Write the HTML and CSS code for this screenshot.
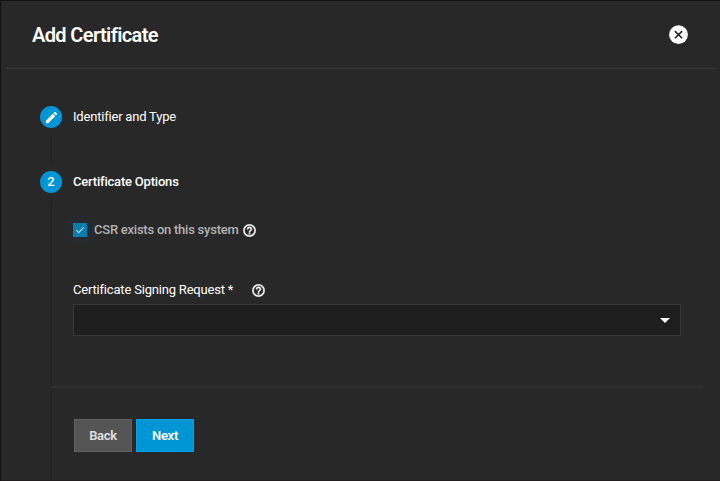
FILE: index.html
```html
<!DOCTYPE html>
<html lang="en">
<head>
<meta charset="utf-8">
<title>Add Certificate</title>
<link rel="stylesheet" href="styles.css">
</head>
<body>
<main class="panel">
  <header class="header">
    <h1 class="title">Add Certificate</h1>
    <button class="close" aria-label="Close"><svg width="20" height="20" viewBox="0 0 20 20"><circle cx="9.500" cy="9.700" r="9.400" fill="#fff"/><path d="M5.900 6.100l7.200 7.200M13.100 6.100l-7.200 7.200" stroke="#222" stroke-width="1.6"/></svg></button>
  </header>
  <section class="step">
    <div class="rail">
      <span class="badge"><svg width="15" height="15" viewBox="0 0 24 24" fill="#fff"><path d="M3 17.25V21h3.75L17.81 9.94l-3.75-3.75L3 17.25zM20.71 7.04a1 1 0 0 0 0-1.41l-2.34-2.34a1 1 0 0 0-1.41 0l-1.83 1.83 3.75 3.75 1.83-1.83z"/></svg></span>
      <span class="line"></span>
    </div>
    <div class="content"><h2 class="label first">Identifier and Type</h2></div>
  </section>
  <section class="step active">
    <div class="rail">
      <span class="badge">2</span>
      <span class="line"></span>
    </div>
    <div class="content">
      <h2 class="label second">Certificate Options</h2>
      <div class="check-row">
        <span class="checkbox"><svg width="14" height="14" viewBox="0 0 14 14"><path d="M3.3 7.2l2.4 2.5 5-5.3" fill="none" stroke="#bfcdd4" stroke-width="1.2"/></svg></span>
        <span class="check-text">CSR exists on this system</span>
        <svg class="help" width="13" height="13" viewBox="1.500 1.500 21 21" fill="#fff"><path d="M11 18h2v-2h-2v2zm1-16a10 10 0 1 0 0 20 10 10 0 0 0 0-20zm0 18a8 8 0 1 1 0-16 8 8 0 0 1 0 16zm0-14a4 4 0 0 0-4 4h2a2 2 0 1 1 4 0c0 2-3 1.750-3 5h2c0-2.250 3-2.500 3-5a4 4 0 0 0-4-4z" stroke="#fff" stroke-width=".7"/></svg>
      </div>
      <div class="field-head">
        <span class="field-label">Certificate Signing Request *</span>
        <svg class="help" width="13" height="13" viewBox="1.500 1.500 21 21" fill="#fff"><path d="M11 18h2v-2h-2v2zm1-16a10 10 0 1 0 0 20 10 10 0 0 0 0-20zm0 18a8 8 0 1 1 0-16 8 8 0 0 1 0 16zm0-14a4 4 0 0 0-4 4h2a2 2 0 1 1 4 0c0 2-3 1.750-3 5h2c0-2.250 3-2.500 3-5a4 4 0 0 0-4-4z" stroke="#fff" stroke-width=".7"/></svg>
      </div>
      <div class="select"><span class="arrow"></span></div>
      <div class="actions">
        <button class="btn back">Back</button>
        <button class="btn next">Next</button>
      </div>
    </div>
  </section>
</main>
</body>
</html>
```
FILE: styles.css
```css
* { box-sizing: border-box; }
body {
  margin: 0;
  height: 481px;
  overflow: hidden;
  background: #282828;
  color: #fff;
  font: 13px/16px Roboto, sans-serif;
}
.panel {
  display: flex;
  flex-direction: column;
  height: 481px;
  border-top: 1px solid #101010;
  border-left: 1px solid #101010;
  border-bottom: 1px solid #1f1d1e;
}
.header {
  display: flex;
  justify-content: space-between;
  align-items: center;
  height: 68px;
  margin: 0 4px;
  padding: 0 27px;
  border-bottom: 1px solid #3a3a3a;
}
.title {
  margin: 0;
  font-size: 20px;
  line-height: 24px;
  font-weight: 600;
  letter-spacing: -0.62px;
}
.close {
  display: flex;
  padding: 0;
  border: 0;
  background: none;
}
.step {
  display: flex;
  height: 65px;
  margin-left: 39px;
}
.header + .step { margin-top: 37px; }
.step.active { height: auto; flex: 1; }
.rail {
  display: flex;
  flex-direction: column;
  align-items: center;
  width: 22px;
  margin-right: 11px;
}
.badge {
  display: flex;
  flex: none;
  align-items: center;
  justify-content: center;
  width: 22px;
  height: 22px;
  border-radius: 50%;
  background: #0095d5;
  font-size: 13px;
  font-weight: 500;
}
.line {
  flex: 1;
  width: 1px;
  margin: 8px 0;
  background: #202020;
}
.active .line { margin-bottom: 0; }
.content { flex: 1; }
.label {
  margin: 3px 0 0;
  font-size: 13px;
  font-weight: 400;
  letter-spacing: -0.2px;
}
.second { font-weight: 500; }
.check-row {
  display: flex;
  align-items: center;
  height: 16px;
  margin-top: 32px;
}
.checkbox {
  display: flex;
  width: 14px;
  height: 14px;
  margin-right: 7px;
  background: #087eae;
  position: relative;
}
.checkbox::before {
  content: "";
  position: absolute;
  z-index: -1;
  inset: -10px;
  border-radius: 50%;
  background: #262a2c;
  clip-path: inset(2px 0 0 0);
}
.check-text {
  width: 149px;
  white-space: nowrap;
  color: #b2b2b2;
  font-weight: 500;
  letter-spacing: -0.24px;
}
.help { display: block; flex: none; }
.field-head {
  display: flex;
  align-items: center;
  height: 16px;
  margin-top: 44px;
}
.field-label {
  width: 179px;
  white-space: nowrap;
  letter-spacing: -0.19px;
}
.select {
  display: flex;
  align-items: center;
  justify-content: flex-end;
  width: 608px;
  height: 32px;
  margin-top: 6px;
  padding-right: 10px;
  border: 1px solid #383838;
  background: #1e1e1e;
}
.arrow {
  border: 5px solid transparent;
  border-top-color: #fff;
  border-bottom: 0;
}
.actions {
  display: flex;
  gap: 4px;
  width: 652px;
  margin: 50px 0 0 -22px;
  padding: 31px 0 0 23px;
  border-top: 2px solid #303030;
}
.btn {
  width: 58px;
  height: 33px;
  padding: 0;
  border: 1px solid #606060;
  background: #545454;
  color: #e0e0e0;
  font: 600 13px/16px Roboto, sans-serif;
  letter-spacing: -0.3px;
}
.next {
  border-color: #00a3ee;
  background: #0095d5;
  color: #fff;
}
```
